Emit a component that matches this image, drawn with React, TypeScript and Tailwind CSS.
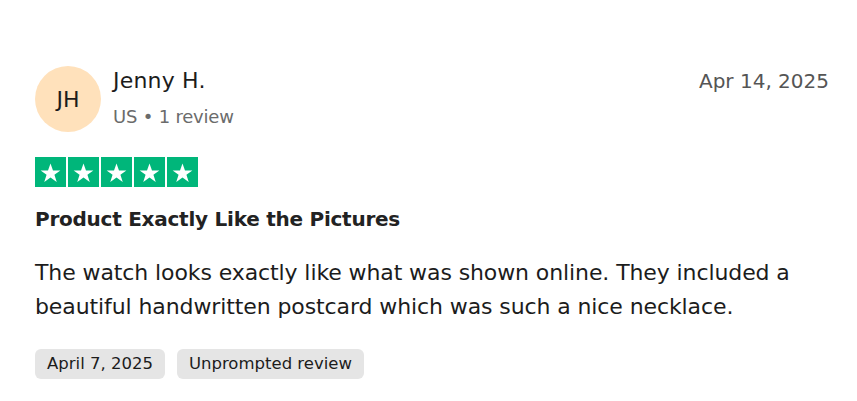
import React from 'react';

const Star = () => (
  <div className="w-[31px] h-[30px] bg-[#00b67a] flex items-center justify-center">
    <svg width="23" height="23" viewBox="0 0 24 24" fill="#fff">
      <path d="M12 2.5l2.6 7.3h7.7l-6.2 4.6 2.4 7.4L12 17.2l-6.5 4.6 2.4-7.4-6.2-4.6h7.7z" />
    </svg>
  </div>
);

export default function App() {
  return (
    <div className="w-[857px] h-[401px] bg-white text-[#1c1c1c] font-['DejaVu_Sans','Liberation_Sans',sans-serif]">
      <div className="pt-[66px] pl-[35px] pr-[28px]">
        {/* Header */}
        <div className="flex items-start justify-between">
          <div className="flex items-center gap-3">
            <div className="w-[66px] h-[66px] rounded-full bg-[#ffe1bb] flex items-center justify-center text-[22px] text-[#1c1c1c]">
              JH
            </div>
            <div className="flex flex-col gap-[6px]">
              <span className="text-[22px] leading-[30px] tracking-[0.2px]">Jenny H.</span>
              <span className="text-[18px] leading-[30px] text-[#6b6b6b] tracking-[-0.2px]">US • 1 review</span>
            </div>
          </div>
          <span className="text-[20px] leading-[30px] text-[#555]">Apr 14, 2025</span>
        </div>

        {/* Stars */}
        <div className="flex gap-[2px] mt-[25px]">
          <Star />
          <Star />
          <Star />
          <Star />
          <Star />
        </div>

        <h2 className="mt-[17px] text-[20px] leading-[30px] font-bold tracking-[-0.25px] text-[#222]">Product Exactly Like the Pictures</h2>

        <p className="mt-[22px] text-[22px] leading-[34px] tracking-[-0.1px] text-[#1c1c1c] max-w-[790px]">
          The watch looks exactly like what was shown online. They included a beautiful handwritten postcard which was such a nice necklace.
        </p>

        <div className="flex gap-3 mt-[25px]">
          <span className="h-[30px] px-3 rounded-md bg-[#e5e5e5] text-[16.5px] leading-[30px]">April 7, 2025</span>
          <span className="h-[30px] px-3 rounded-md bg-[#e5e5e5] text-[16.5px] leading-[30px]">Unprompted review</span>
        </div>
      </div>
    </div>
  );
}
